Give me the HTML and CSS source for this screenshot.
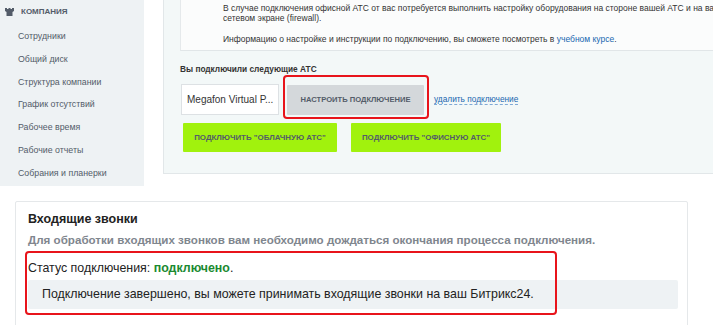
FILE: index.html
```html
<!DOCTYPE html>
<html lang="ru">
<head>
  <meta charset="UTF-8">
  <meta name="viewport" content="width=device-width, initial-scale=1.0">
  <title>Телефония</title>
  <link rel="stylesheet" href="styles.css">
</head>
<body>
  <div class="top">
    <div class="sidebar">
      <div class="menu-title">
        <svg class="tower" width="9" height="8" viewBox="0 0 9 8">
          <path d="M0 0h2v1h1.5V0h2v1H7V0h2v3L7.5 4v4h-6V4L0 3z" fill="#535c69"/>
        </svg>
        КОМПАНИЯ
      </div>
      <ul class="menu">
        <li>Сотрудники</li>
        <li>Общий диск</li>
        <li>Структура компании</li>
        <li>График отсутствий</li>
        <li>Рабочее время</li>
        <li>Рабочие отчеты</li>
        <li>Собрания и планерки</li>
      </ul>
    </div>

    <div class="main">
      <div class="panel">
        <div class="note">
          <p>В случае подключения офисной АТС от вас потребуется выполнить настройку оборудования на стороне вашей АТС и на вашем<br>сетевом экране (firewall).</p>
          <p>Информацию о настройке и инструкции по подключению, вы сможете посмотреть в <a href="#">учебном курсе</a>.</p>
        </div>

        <div class="connected">
          <div class="label">Вы подключили следующие АТС</div>
          <div class="row">
            <div class="select">Megafon Virtual P...</div>
            <button class="btn-grey">Настроить подключение</button>
            <a href="#" class="dash-link">удалить подключение</a>
            <span class="mark mark-top"></span>
          </div>
          <div class="row">
            <button class="btn-green wide">Подключить "облачную АТС"</button>
            <button class="btn-green">Подключить "офисную АТС"</button>
          </div>
        </div>
      </div>
    </div>
  </div>

  <div class="card">
    <h2>Входящие звонки</h2>
    <div class="hint">Для обработки входящих звонков вам необходимо дождаться окончания процесса подключения.</div>
    <div class="status">Статус подключения: <b>подключено</b>.</div>
    <div class="done">Подключение завершено, вы можете принимать входящие звонки на ваш Битрикс24.</div>
    <span class="mark mark-bottom"></span>
  </div>
</body>
</html>
```

FILE: styles.css
```css
body {
  margin: 0;
  width: 713px;
  height: 325px;
  overflow: hidden;
  background: #ffffff;
  font-family: "Liberation Sans", Arial, sans-serif;
  color: #333333;
}

.top {
  display: flex;
  height: 186px;
}

.sidebar {
  width: 144px;
  flex-shrink: 0;
  background-color: #eef2f4;
}

.menu-title {
  display: flex;
  align-items: center;
  gap: 7px;
  padding: 7px 0 0 5px;
  height: 9px;
  font-size: 8px;
  font-weight: bold;
  color: #535c69;
}

.menu {
  list-style: none;
  margin: 0;
  padding: 13px 0 0 18px;
}

.menu li {
  height: 22.8px;
  line-height: 14px;
  font-size: 8.8px;
  color: #535c69;
}

.main {
  flex: 1;
  padding-left: 19px;
  overflow: hidden;
}

.panel {
  width: 620px;
  height: 173px;
  background-color: #f3f8f8;
  border-left: 1px solid #e2e7e9;
  border-bottom: 1px solid #e2e7e9;
}

.note {
  margin-left: 16px;
  height: 50px;
  padding-left: 42px;
  background-color: #fbfcfc;
  border-left: 1px solid #e5e9eb;
  border-bottom: 1px solid #e1e6e8;
  font-size: 8.5px;
  line-height: 10.4px;
  white-space: nowrap;
}

.note p {
  margin: 0;
  padding-top: 3px;
}

.note p + p {
  padding-top: 10px;
}

.note a {
  color: #2067b0;
  text-decoration: none;
}

.connected {
  padding: 13px 0 0 16px;
}

.label {
  font-size: 8.3px;
  line-height: 10px;
  font-weight: bold;
  color: #333333;
  height: 20px;
}

.row {
  position: relative;
  display: flex;
  align-items: center;
  gap: 9px;
  margin-bottom: 8px;
}

.select {
  width: 91px;
  height: 29px;
  line-height: 29px;
  padding-left: 5px;
  margin-left: 1px;
  background: #ffffff;
  border: 1px solid #dde1e4;
  font-size: 10px;
  color: #333333;
  white-space: nowrap;
}

button {
  font-family: inherit;
  border: none;
  border-radius: 1px;
  text-transform: uppercase;
  font-weight: bold;
  font-size: 7.6px;
  color: #535c69;
  cursor: pointer;
}

.btn-grey {
  width: 137px;
  height: 30px;
  margin-left: -1px;
  background-color: #d4d8db;
}

.dash-link {
  margin-left: 1px;
  font-size: 8.3px;
  color: #2067b0;
  text-decoration: none;
  border-bottom: 1px dashed #7fa9d6;
}

.btn-green {
  width: 150px;
  height: 29px;
  margin-left: 5px;
  font-size: 7.9px;
  background-color: #a1f20d;
}

.btn-green.wide {
  width: 154px;
  margin-left: 3px;
}

.btn-green + .btn-green {
  margin-left: 5px;
}

.mark {
  position: absolute;
  border: 2px solid #e8141b;
  border-radius: 4px;
}

.mark-top {
  left: 103px;
  top: -9px;
  width: 142px;
  height: 40px;
}

.card {
  position: relative;
  margin: 15px 0 0 15px;
  width: 650px;
  height: 130px;
  padding: 0 9px 0 12px;
  border: 1px solid #e5e8ea;
  border-radius: 2px;
}

.card h2 {
  margin: 0;
  padding-top: 9px;
  font-size: 12.5px;
  line-height: 16px;
  font-weight: bold;
  color: #222222;
}

.hint {
  margin-top: 6px;
  font-size: 11.6px;
  line-height: 14px;
  font-weight: bold;
  color: #80868e;
}

.status {
  margin-top: 13px;
  font-size: 12.4px;
  line-height: 16px;
  color: #222222;
}

.status b {
  color: #1b8a31;
}

.done {
  margin-top: 4px;
  height: 29px;
  line-height: 29px;
  padding-left: 14px;
  background-color: #eef2f4;
  border-radius: 2px;
  font-size: 12.4px;
  color: #222222;
}

.mark-bottom {
  left: 9px;
  top: 49px;
  width: 528px;
  height: 60px;
}
```
